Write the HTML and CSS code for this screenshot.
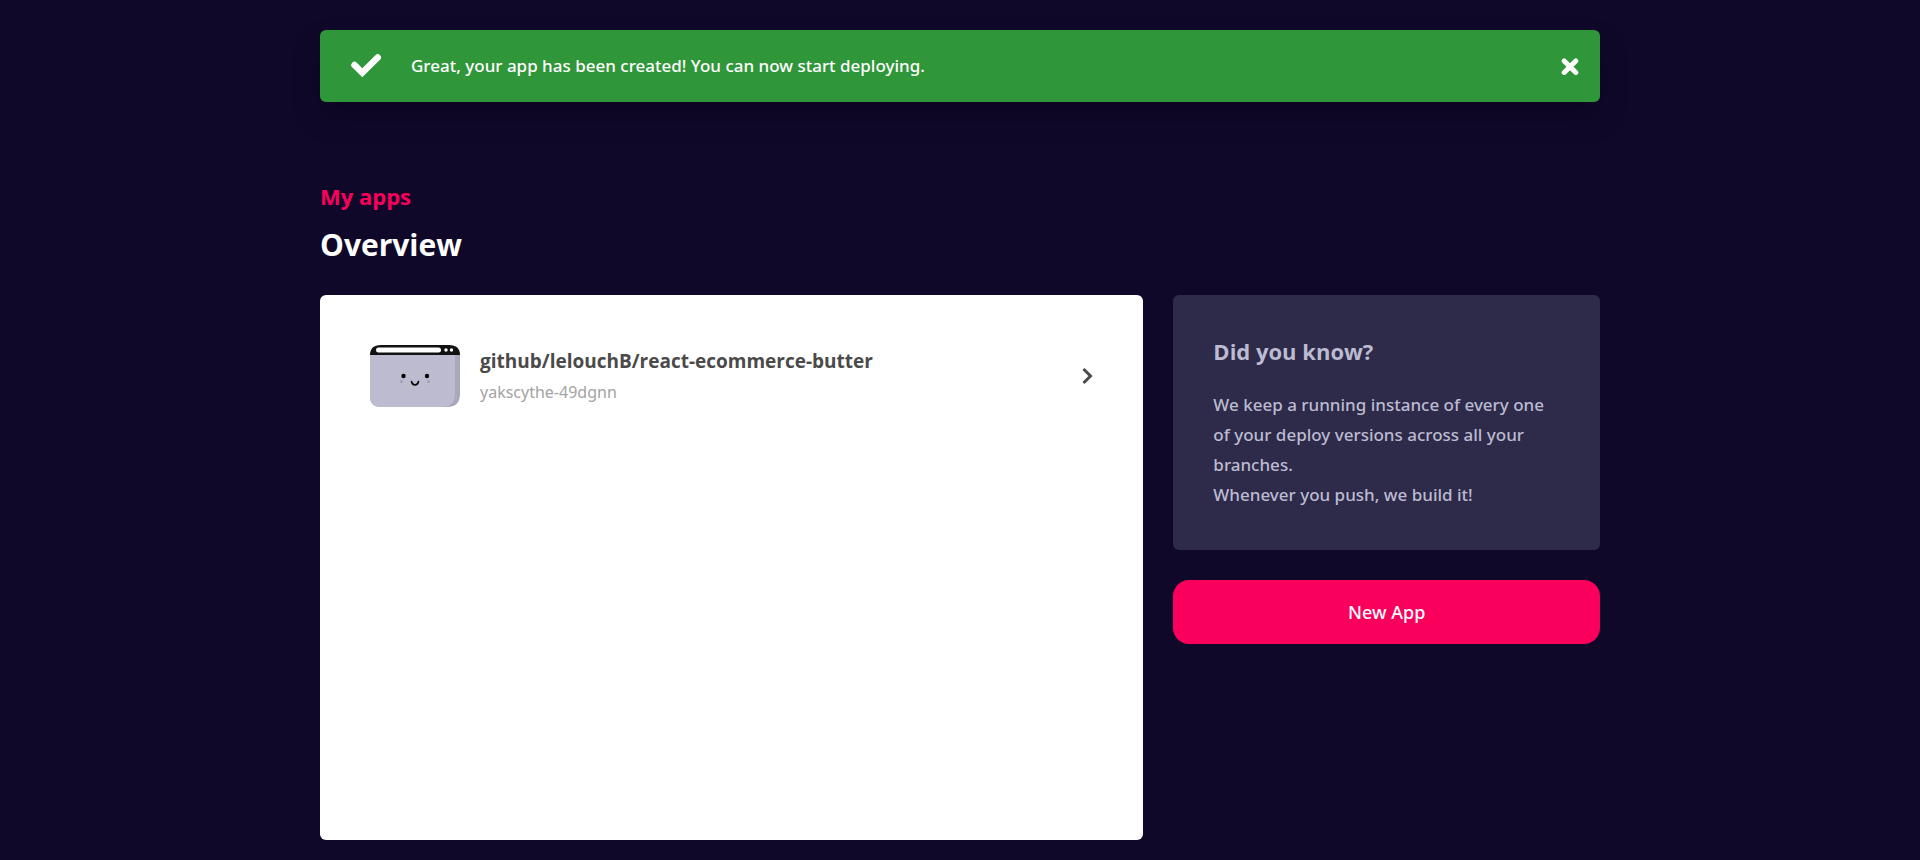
FILE: index.html
```html
<!DOCTYPE html>
<html lang="en">
<head>
<meta charset="utf-8">
<meta name="viewport" content="width=device-width, initial-scale=1">
<title>My apps</title>
<link rel="stylesheet" href="styles.css">
</head>
<body>
<div class="container">
  <div class="alert" role="status">
    <svg class="alert-icon" viewBox="0 0 32 32" aria-hidden="true"><path d="M4.500 15 L12.300 22.700 L27.700 7.500" fill="none" stroke="#fff" stroke-width="6.500" stroke-linecap="round"/></svg>
    <p class="alert-text">Great, your app has been created! You can now start deploying.</p>
    <button class="alert-close" type="button" aria-label="Close">
      <svg class="close-icon" viewBox="0 0 18 18" aria-hidden="true"><path d="M3.200 4 L14.800 15.600 M14.800 4 L3.200 15.600" fill="none" stroke="#fff" stroke-width="5" stroke-linecap="round"/></svg>
    </button>
  </div>
  <header class="page-head">
    <p class="section">My apps</p>
    <h1 class="title">Overview</h1>
  </header>
  <div class="columns">
    <main class="apps">
      <a class="app" href="#">
        <svg class="app-image" viewBox="0 0 90 62" aria-hidden="true">
          <path d="M0 10H90V49Q90 62 77 62H11Q0 62 0 51Z" fill="#a9a8bb"/>
          <path d="M0 10H85V48Q85 62 72 62H11Q0 62 0 51Z" fill="#bcbbd0"/>
          <path d="M0 10Q0 0 11 0H79Q90 0 90 10Z" fill="#111"/>
          <rect x="6" y="2.500" width="65" height="5" rx="2.500" fill="#fff"/>
          <circle cx="76" cy="5" r="1.700" fill="#fff"/>
          <circle cx="81.500" cy="5" r="1.700" fill="#fff"/>
          <circle cx="33.500" cy="31" r="2.200"/>
          <circle cx="57" cy="31" r="2.200"/>
          <circle cx="31.500" cy="36.500" r="1.500" fill="#a09fb4"/>
          <circle cx="58.500" cy="36.500" r="1.500" fill="#a09fb4"/>
          <path d="M41.500 36.500C42.300 41 47.700 41 48.500 36.500" fill="none" stroke="#000" stroke-width="1.500" stroke-linecap="round"/>
        </svg>
        <span class="app-info">
          <strong class="app-name">github/lelouchB/react-ecommerce-butter</strong>
          <span class="app-id">yakscythe-49dgnn</span>
        </span>
        <svg class="chevron" viewBox="0 0 12 18" aria-hidden="true"><path d="M2.500 2L9.500 9L2.500 16" fill="none" stroke="#4a4a4a" stroke-width="3"/></svg>
      </a>
    </main>
    <aside class="side">
      <section class="tip">
        <h2 class="tip-title">Did you know?</h2>
        <p class="tip-text">We keep a running instance of every one of your deploy versions across all your branches.<br>Whenever you push, we build it!</p>
      </section>
      <button class="new-app" type="button">New App</button>
    </aside>
  </div>
</div>
</body>
</html>
```
FILE: styles.css
```css
* { box-sizing: border-box; }
body {
  margin: 0;
  background: #0f0829;
  color: #fff;
  font-family: "Noto Sans", "Open Sans", sans-serif;
  font-size: 17px;
  line-height: 30px;
}
p, h1, h2 { margin: 0; }
button { border: 0; padding: 0; font: inherit; color: inherit; cursor: pointer; }
.container { max-width: 1280px; margin: 0 auto; padding: 30px 0 20px; }
.alert {
  display: flex;
  align-items: center;
  min-height: 72px;
  padding: 0 21px 0 30px;
  border-radius: 6px;
  background: #2f9639;
  box-shadow: 0 15px 30px rgba(0, 0, 0, 0.2);
}
.alert-icon { width: 32px; height: 32px; margin-right: 29px; }
.alert-text { flex: 1; font-weight: 500; }
.alert-close { display: flex; background: none; }
.close-icon { width: 18px; height: 18px; }
.page-head { padding: 76px 0 30px; }
.section, .title, .tip-title, .app-name { font-family: "Open Sans", "Noto Sans", sans-serif; font-weight: 700; }
.section { color: #fa005c; font-size: 22px; line-height: 36px; }
.title { font-size: 30px; line-height: 40px; margin-top: 11px; }
.columns { display: flex; align-items: flex-start; gap: 30px; }
.apps {
  flex: 1;
  min-width: 0;
  min-height: 545px;
  padding: 50px;
  border-radius: 6px;
  background: #fff;
}
.app { display: flex; align-items: center; color: inherit; text-decoration: none; }
.app-image { width: 90px; height: 62px; margin-right: 20px; }
.app-info { display: flex; flex-direction: column; flex: 1; }
.app-name { color: #4a4a4a; font-size: 19px; line-height: 32px; }
.app-id { color: #a3a3a3; font-size: 16px; }
.chevron { width: 12px; height: 18px; }
.side { flex: 0 0 33.333%; display: flex; flex-direction: column; gap: 30px; }
.tip { padding: 40px; border-radius: 6px; background: #2d2a4a; color: #bcbbd0; }
.tip-title { font-size: 22px; line-height: 33px; margin-bottom: 22px; }
.tip-text { padding-right: 10px; font-weight: 500; }
.new-app { height: 64px; border-radius: 16px; background: #fa005c; font-size: 18px; font-weight: 500; }
```
